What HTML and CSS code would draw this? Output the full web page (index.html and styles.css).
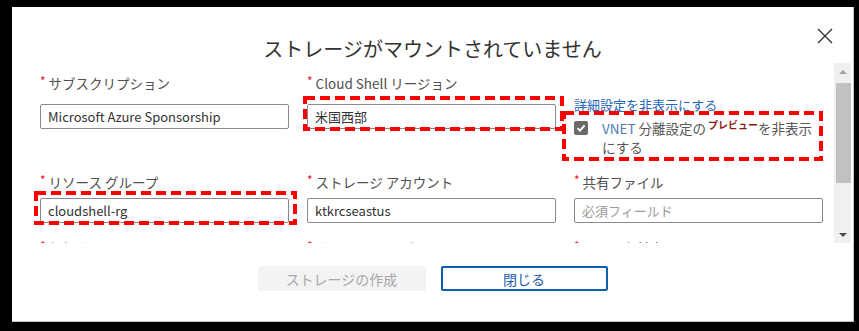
FILE: index.html
```html
<!DOCTYPE html>
<html lang="ja">
<head>
  <meta charset="UTF-8">
  <meta name="viewport" content="width=device-width, initial-scale=1.0">
  <title>ストレージがマウントされていません</title>
  <link rel="stylesheet" href="styles.css">
</head>
<body>

<div class="dialog">
  <button class="close" title="閉じる">
    <svg width="16" height="16" viewBox="0 0 16 16"><path d="M1 1L15 15M15 1L1 15" stroke="#333" stroke-width="1.4" fill="none"/></svg>
  </button>
  <h1 class="title">ストレージがマウントされていません</h1>

  <div class="body">
    <div class="form">
      <div class="field">
        <label><span class="req">*</span>サブスクリプション</label>
        <div class="input">Microsoft Azure Sponsorship</div>
      </div>
      <div class="field">
        <label><span class="req">*</span>Cloud Shell リージョン</label>
        <div class="input">米国西部</div>
      </div>
      <div class="options">
        <a class="link" href="#">詳細設定を非表示にする</a>
        <div class="check-row">
          <span class="checkbox">
            <svg width="10" height="10" viewBox="0 0 10 10"><path d="M1.5 5.2L4 7.6L8.6 2.4" stroke="#fff" stroke-width="1.8" fill="none"/></svg>
          </span>
          <span class="check-text"><span class="vnet">VNET</span> 分離設定の<span class="preview">プレビュー</span>を非表示<br>にする</span>
        </div>
      </div>

      <div class="field field-tight">
        <label><span class="req">*</span>リソース グループ</label>
        <div class="input">cloudshell-rg</div>
      </div>
      <div class="field field-tight">
        <label><span class="req">*</span>ストレージ アカウント</label>
        <div class="input">ktkrcseastus</div>
      </div>
      <div class="field field-tight">
        <label><span class="req">*</span>共有ファイル</label>
        <div class="input placeholder">必須フィールド</div>
      </div>

      <div class="field">
        <label><span class="req">*</span>仮想ネットワーク</label>
      </div>
      <div class="field">
        <label><span class="req">*</span>ネットワーク プロファイル</label>
      </div>
      <div class="field">
        <label><span class="req">*</span>リレー名前空間</label>
      </div>
    </div>

    <div class="scrollbar">
      <div class="arrow arrow-up"></div>
      <div class="track"><div class="thumb"></div></div>
      <div class="arrow arrow-down"></div>
    </div>
  </div>

  <div class="actions">
    <button class="btn btn-disabled" disabled>ストレージの作成</button>
    <button class="btn btn-outline">閉じる</button>
  </div>

  <!-- red dashed call-outs drawn over the form -->
  <div class="mark mark-region"><svg><rect/></svg></div>
  <div class="mark mark-group"><svg><rect/></svg></div>
  <div class="mark mark-vnet"><svg><rect/></svg></div>
</div>

</body>
</html>
```

FILE: styles.css
```css
body {
  margin: 0;
  background-color: #000;
  font-family: "Noto Sans CJK JP", "Noto Sans", sans-serif;
  color: #333;
}
.dialog {
  position: relative;
  box-sizing: border-box;
  width: 842px;
  height: 315px;
  margin: 7px 0 0 12px;
  background-color: #fff;
  border-right: 1px solid #c4c4c4;
  border-bottom: 1px solid #c4c4c4;
}
.close {
  position: absolute;
  top: 21px;
  left: 805px;
  width: 16px;
  height: 16px;
  padding: 0;
  border: none;
  background: none;
}
.title {
  margin: 0;
  padding-top: 28px;
  height: 28px;
  line-height: 28px;
  font-size: 20px;
  font-weight: normal;
  text-align: center;
  color: #333;
}

.body {
  display: flex;
  height: 180px;
}
.form {
  flex: 1;
  overflow: hidden;
  padding: 8px 0 0 28px;
  display: grid;
  grid-template-columns: 249px 249px 249px;
  column-gap: 18px;
  row-gap: 13px;
  align-content: start;
}
.field label {
  display: block;
  line-height: 20px;
  font-size: 13.5px;
  color: #505050;
}
.req {
  color: #e81123;
  font-size: 12px;
  vertical-align: 3px;
  margin-right: 3px;
}
.input {
  box-sizing: border-box;
  height: 25px;
  margin-top: 11px;
  padding: 0 7px;
  line-height: 23px;
  font-size: 13px;
  color: #333;
  border: 1px solid #8a8a8a;
  border-radius: 2px;
}
.field-tight .input {
  margin-top: 6px;
}
.input.placeholder {
  color: #9a9a9a;
}

.options {
  padding-top: 26px;
}
.link {
  display: block;
  line-height: 16px;
  font-size: 13px;
  color: #1f67b8;
  text-decoration: none;
}
.check-row {
  display: flex;
  gap: 14px;
  margin-top: 6px;
}
.checkbox {
  flex: none;
  display: flex;
  align-items: center;
  justify-content: center;
  width: 14px;
  height: 14px;
  margin-top: 2px;
  border-radius: 2px;
  background-color: #6b6b6b;
}
.check-text {
  line-height: 19px;
  font-size: 13.5px;
  color: #555;
}
.vnet {
  color: #4d7cb3;
}
.preview {
  font-size: 10px;
  font-weight: bold;
  color: #8e1b1b;
  vertical-align: 5px;
  line-height: 1;
  margin: 0 0 0 2px;
}

.scrollbar {
  width: 17px;
  margin-right: 2px;
  background-color: #f0f0f0;
  display: flex;
  flex-direction: column;
}
.arrow {
  height: 17px;
  display: flex;
  align-items: center;
  justify-content: center;
}
.arrow::after {
  content: "";
  border-left: 4px solid transparent;
  border-right: 4px solid transparent;
}
.arrow-up::after {
  border-bottom: 4px solid #a3a3a3;
}
.arrow-down::after {
  border-top: 4px solid #505050;
}
.track {
  flex: 1;
  padding: 3px 0 0 2px;
}
.thumb {
  height: 100px;
  background-color: #c1c1c1;
}

.actions {
  display: flex;
  justify-content: center;
  gap: 15px;
  padding-top: 23px;
}
.btn {
  box-sizing: border-box;
  height: 25px;
  font-family: inherit;
  font-size: 14px;
  border-radius: 2px;
}
.btn-disabled {
  width: 168px;
  border: none;
  background-color: #f3f3f3;
  color: #a8a8a8;
}
.btn-outline {
  width: 167px;
  border: 2px solid #0f5fb0;
  background-color: #fff;
  color: #1a5ea9;
}

.mark {
  position: absolute;
}
.mark svg {
  display: block;
  width: 100%;
  height: 100%;
}
.mark rect {
  x: 2px;
  y: 2px;
  width: calc(100% - 4px);
  height: calc(100% - 4px);
  fill: none;
  stroke: #f00;
  stroke-width: 4;
  stroke-dasharray: 10 5;
}
.mark-region {
  left: 291px;
  top: 89px;
  width: 261px;
  height: 35px;
}
.mark-group {
  left: 22px;
  top: 184px;
  width: 263px;
  height: 34px;
}
.mark-vnet {
  left: 550px;
  top: 104px;
  width: 261px;
  height: 50px;
}
```
